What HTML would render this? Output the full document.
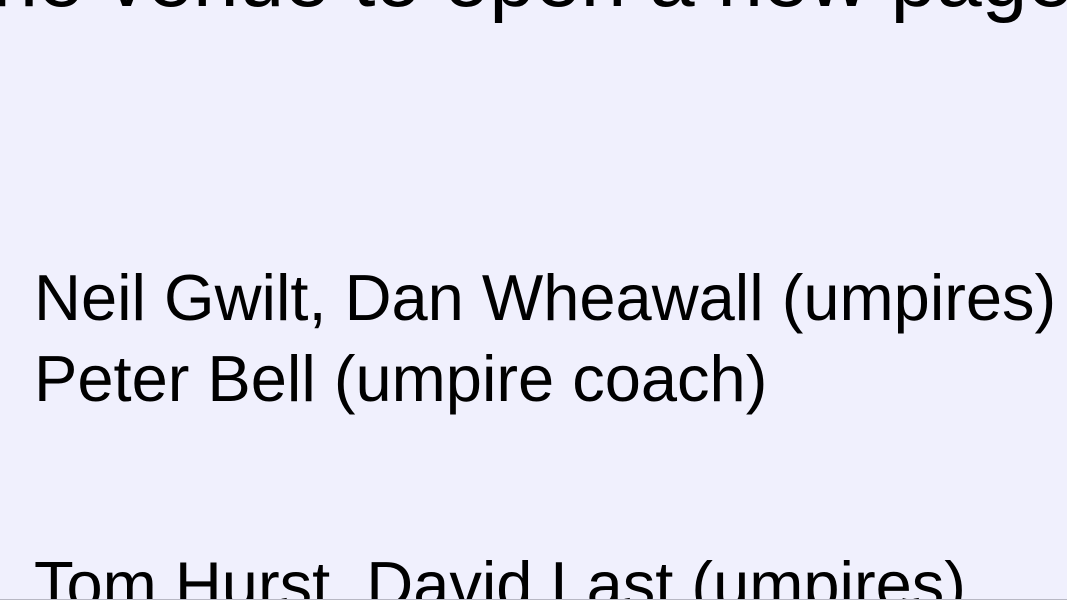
<!DOCTYPE html>
<html><head><style>
html,body{margin:0;padding:0;width:1067px;height:600px;overflow:hidden}
body{background:#f0f0fd;position:relative;font-family:"Liberation Sans",Arial,sans-serif;color:#000}
.t{position:absolute;white-space:nowrap;font-size:65px;line-height:1}
.bl{position:absolute;left:0;right:0;top:599px;height:1px;background:#b8b8c4}
</style></head><body>
<div class="t" style="right:-6px;top:-62px;font-size:82px">the venue to open a new page</div>
<div class="t" style="left:34px;top:265px">Neil Gwilt, Dan Wheawall (umpires)</div>
<div class="t" style="left:34px;top:346px">Peter Bell (umpire coach)</div>
<div class="t" style="left:34px;top:552px">Tom Hurst, David Last (umpires)</div>
<div class="bl"></div>
</body></html>
